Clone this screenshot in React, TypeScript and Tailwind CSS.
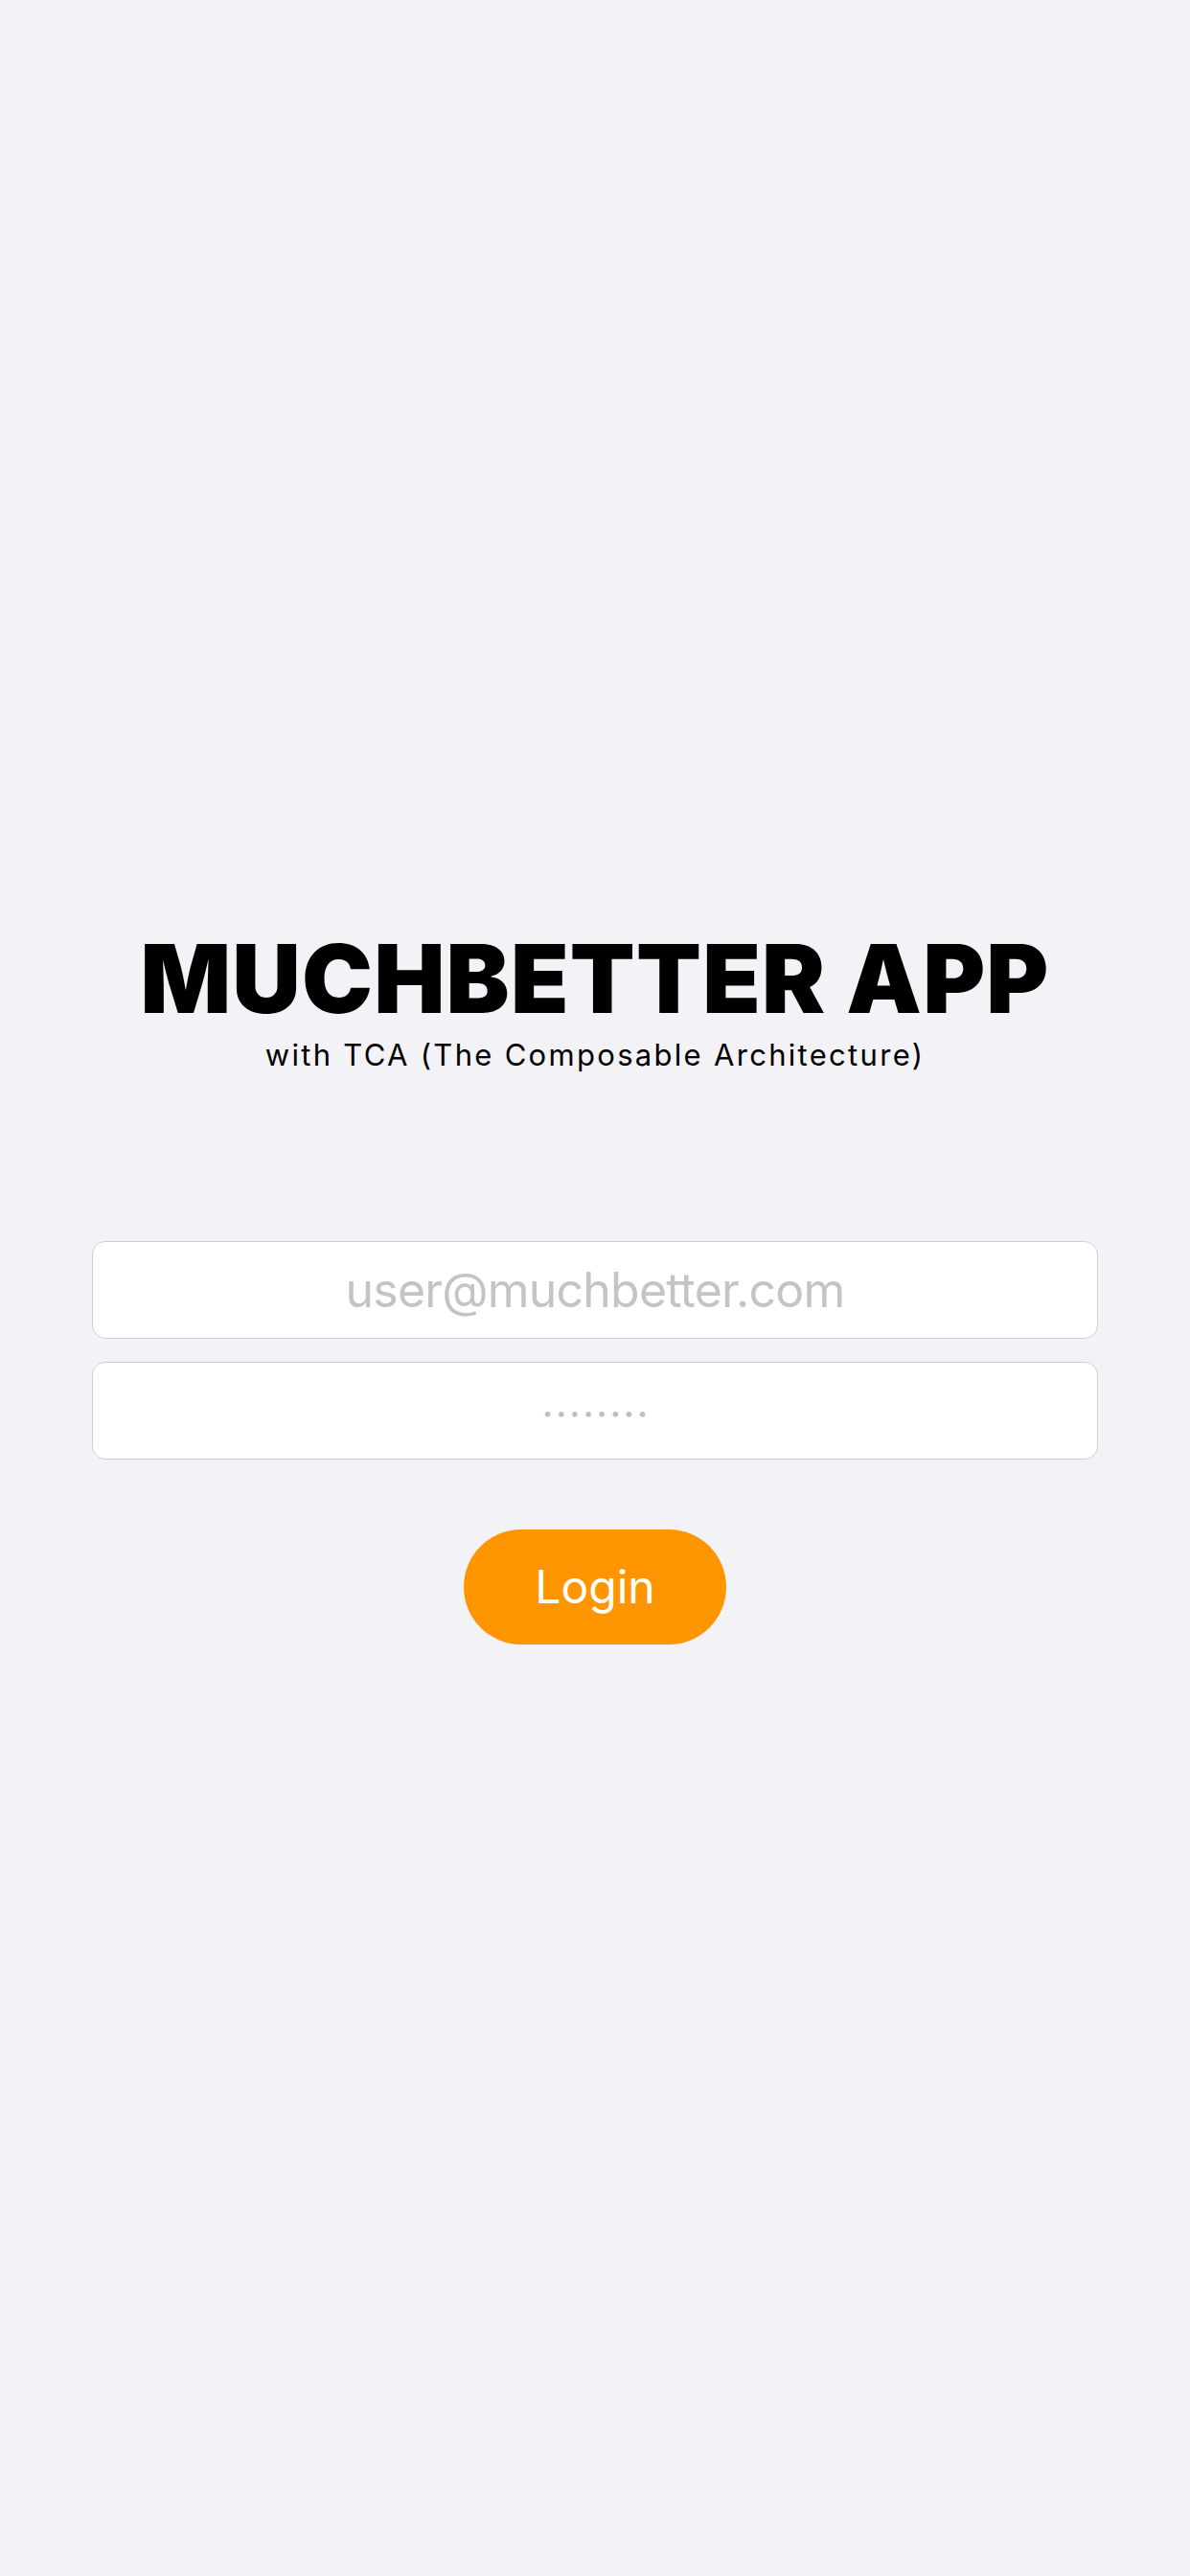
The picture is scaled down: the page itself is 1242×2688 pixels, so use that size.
export default function App() {
  return (
    <div
      className="min-h-screen w-full bg-[#f2f2f7] flex flex-col items-center justify-center"
      style={{ fontFamily: 'Inter, "Noto Sans", sans-serif' }}
    >
      <h1 className="text-[99px] leading-none font-black text-black tracking-[1.2px]">
        MUCHBETTER APP
      </h1>
      <p className="mt-[12px] text-[31px] leading-[36px] text-black tracking-[2.3px]">
        with TCA (The Composable Architecture)
      </p>

      <div className="mt-[176px] w-full px-[96px] flex flex-col gap-6">
        <div className="h-[102px] bg-white border border-[#cfcfd3] rounded-[14px] flex items-center justify-center">
          <span className="text-[50px] text-[#c4c4c7] tracking-[-0.8px]">user@muchbetter.com</span>
        </div>
        <div className="h-[102px] bg-white border border-[#cfcfd3] rounded-[14px] flex items-center justify-center">
          <span className="text-[18px] leading-none text-[#bdbdc2] tracking-[4px] pl-[4px] pt-[6px]">••••••••</span>
        </div>
      </div>

      <button className="mt-[73px] h-[120px] px-[74px] rounded-full bg-[#ff9500] text-white text-[48px] font-normal">
        Login
      </button>
    </div>
  );
}
